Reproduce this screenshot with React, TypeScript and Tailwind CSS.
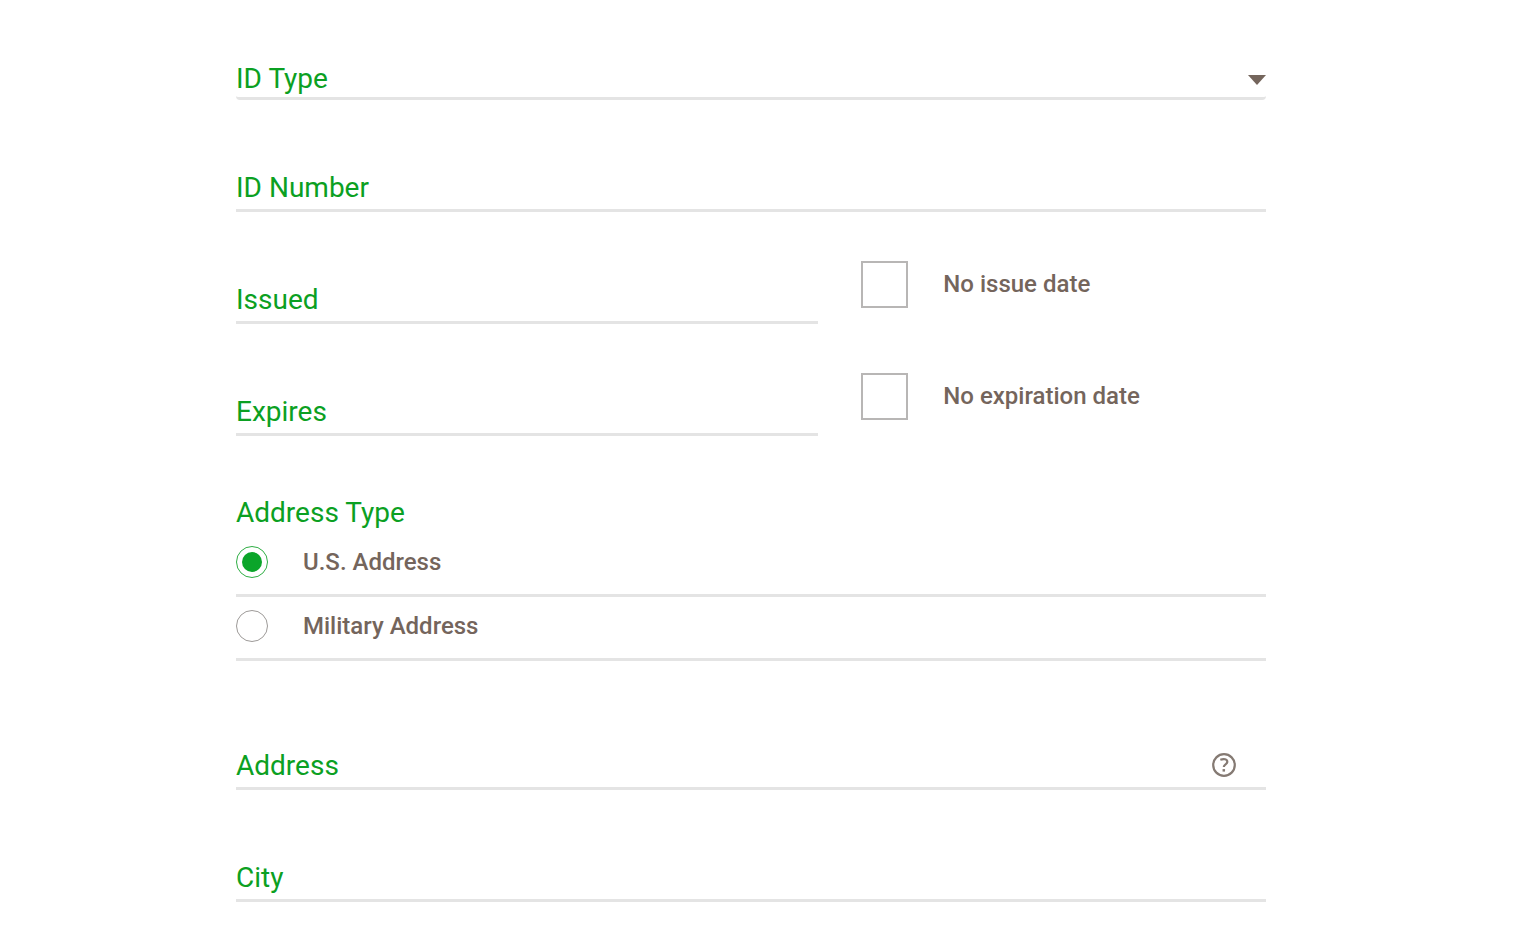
import { useState, type ReactNode } from "react";

const addressTypes = ["U.S. Address", "Military Address"];

type FieldProps = {
  id: string;
  label: string;
  children?: ReactNode;
};

function TextField({ id, label, children }: FieldProps) {
  return (
    <div className="flex h-28 items-end border-b-[3px] border-[#e4e4e4] pb-[5px]">
      <label htmlFor={id} className="text-[28px] leading-8 text-[#0ba022]">
        {label}
      </label>
      <input id={id} type="text" className="h-8 min-w-0 flex-1 px-3 text-2xl text-[#74655c] outline-none" />
      {children}
    </div>
  );
}

function DateField({ id, label, noDateLabel }: { id: string; label: string; noDateLabel: string }) {
  return (
    <div className="grid grid-cols-[59fr_41fr] gap-[43px]">
      <TextField id={id} label={label} />
      <div className="flex items-end pb-4">
        <input
          id={`no-${id}`}
          type="checkbox"
          className="size-[47px] shrink-0 appearance-none border-2 border-[#b8b6b5] bg-white checked:bg-[#0ba022]"
        />
        <label htmlFor={`no-${id}`} className="pl-[35px] text-2xl leading-[47px] font-medium text-[#74655c]">
          {noDateLabel}
        </label>
      </div>
    </div>
  );
}

export default function App() {
  const [addressType, setAddressType] = useState("U.S. Address");

  return (
    <main className="min-h-screen bg-white pr-[262px] pb-10 pl-[236px] font-['Roboto',sans-serif]">
      <form>
        {/* ID type */}
        <div className="relative flex h-[100px] items-end rounded-b-sm border-b-[3px] border-[#e4e4e4] pb-0.5">
          <label htmlFor="id-type" className="text-[28px] leading-8 text-[#0ba022]">
            ID Type
          </label>
          <select
            id="id-type"
            defaultValue=""
            className="h-8 min-w-0 flex-1 appearance-none bg-transparent px-3 text-2xl text-[#74655c] outline-none"
          >
            <option value=""></option>
            <option>Passport</option>
            <option>State ID</option>
          </select>
          <svg
            viewBox="0 0 18 10"
            className="pointer-events-none absolute right-0 bottom-3 h-[10px] w-[18px] fill-[#74655c]"
            aria-hidden="true"
          >
            <path d="M0 0h18L9 10z" />
          </svg>
        </div>

        <TextField id="id-number" label="ID Number" />
        <DateField id="issued" label="Issued" noDateLabel="No issue date" />
        <DateField id="expires" label="Expires" noDateLabel="No expiration date" />

        {/* Address type */}
        <fieldset>
          <legend className="pt-[61px] pb-1 text-[28px] leading-8 text-[#0ba022]">Address Type</legend>
          {addressTypes.map((type) => (
            <label
              key={type}
              className="flex h-16 items-center border-b-[3px] border-[#e4e4e4] pb-1 text-2xl font-medium text-[#74655c]"
            >
              <input
                type="radio"
                name="address-type"
                value={type}
                checked={addressType === type}
                onChange={() => setAddressType(type)}
                className="mr-[35px] size-8 shrink-0 appearance-none rounded-full border border-[#9d9a98] bg-clip-content p-[5px] checked:border-[#2fae44] checked:bg-[#0ba52a]"
              />
              {type}
            </label>
          ))}
        </fieldset>

        <div className="pt-[17px]">
          <TextField id="address" label="Address">
            <button type="button" aria-label="Address help" className="mr-[30px] pb-[5px]">
              <svg viewBox="0 0 24 24" className="size-6" fill="none" stroke="#857a73" aria-hidden="true">
                <circle cx="12" cy="12" r="10.8" strokeWidth="2.2" />
                <path d="M8.3 6.8c3.4-1.2 7-.8 7 2 0 2.7-3.5 2.4-3.5 5.2" strokeWidth="2.2" />
                <path d="M11.8 16.1v2.5" strokeWidth="2.5" />
              </svg>
            </button>
          </TextField>
        </div>
        <TextField id="city" label="City" />
      </form>
    </main>
  );
}
